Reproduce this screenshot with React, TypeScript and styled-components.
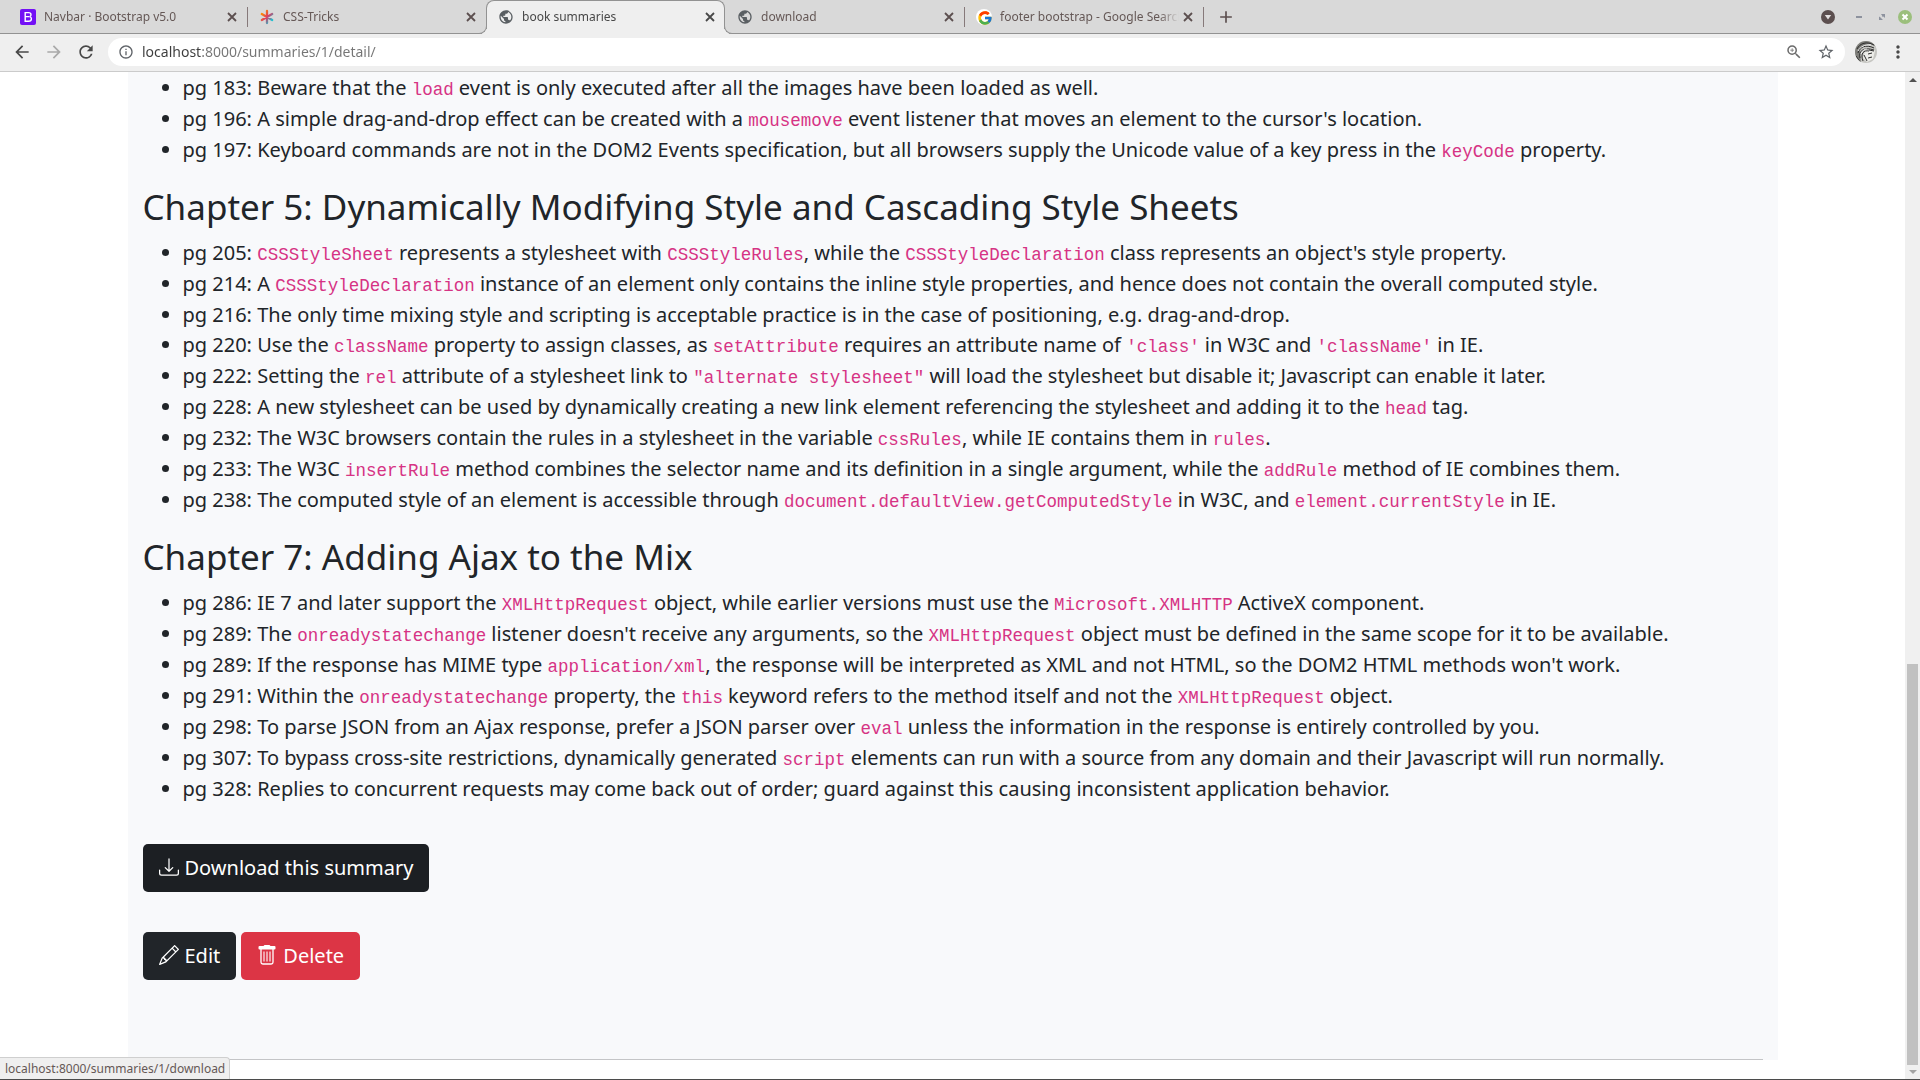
import React from "react";
import styled, { createGlobalStyle } from "styled-components";
import { BsDownload, BsPencil } from "react-icons/bs";
import { FcGoogle } from "react-icons/fc";
import {
  MdArrowBack,
  MdArrowForward,
  MdInfoOutline,
  MdMoreVert,
  MdPublic,
  MdRefresh,
  MdStarBorder,
  MdZoomIn,
  MdAdd,
} from "react-icons/md";

const GlobalStyle = createGlobalStyle`
  *, *::before, *::after { box-sizing: border-box; }
  body {
    margin: 0;
    font-family: "Noto Sans", sans-serif;
    color: #212529;
    background: #fff;
  }
`;

const Browser = styled.div`
  display: flex;
  flex-direction: column;
  height: 100vh;
  border-bottom: 1px solid #4b4b4b;
  overflow: hidden;
`;

const TabStrip = styled.header`
  display: flex;
  align-items: stretch;
  height: 34px;
  flex: none;
  padding: 0 7px 0 8px;
  background: #d9d9d9;
  box-shadow: inset 0 -1px 0 #929292;
`;

const Tabs = styled.nav`
  display: flex;
  min-width: 0;
`;

const Tab = styled.div<{ $active?: boolean; $divider?: boolean }>`
  position: relative;
  display: flex;
  align-items: center;
  gap: 2px;
  width: 239px;
  min-width: 0;
  padding: 0 8px 0 12px;
  color: ${(p) => (p.$active ? "#484848" : "#655856")};
  ${(p) =>
    p.$active &&
    `
    background: #efefef;
    border: 1px solid #929292;
    border-bottom: 0;
    border-radius: 8px 8px 0 0;
    padding: 0 7px 1px 11px;
    &::before, &::after {
      content: "";
      position: absolute;
      bottom: 0;
      width: 8px;
      height: 8px;
      border-bottom: 1px solid #929292;
      background: #d9d9d9;
    }
    &::before {
      left: -8px;
      border-right: 1px solid #929292;
      border-bottom-right-radius: 8px;
      box-shadow: 3px 3px 0 #efefef;
      clip-path: inset(0);
    }
    &::after {
      right: -8px;
      border-left: 1px solid #929292;
      border-bottom-left-radius: 8px;
      box-shadow: -3px 3px 0 #efefef;
      clip-path: inset(0);
    }
  `}
  ${(p) =>
    p.$divider &&
    `
    &::after {
      content: "";
      position: absolute;
      right: -1px;
      top: 7px;
      width: 1px;
      height: 20px;
      background: #86797a;
    }
  `}
`;

const Favicon = styled.span`
  display: flex;
  flex: none;
  width: 16px;
  height: 16px;
  margin-right: 6px;
  color: #5a5f63;
`;

const TabTitle = styled.a`
  flex: 1;
  min-width: 0;
  overflow: hidden;
  white-space: nowrap;
  color: inherit;
  text-decoration: none;
  font-size: 12px;
  line-height: 18px;
  mask-image: linear-gradient(to right, #000 calc(100% - 20px), transparent);
`;

const IconButton = styled.button<{ $size?: number; $color?: string }>`
  display: flex;
  align-items: center;
  justify-content: center;
  flex: none;
  width: ${(p) => p.$size ?? 32}px;
  height: ${(p) => p.$size ?? 32}px;
  padding: 0;
  border: 0;
  background: none;
  color: ${(p) => p.$color ?? "#484848"};
`;

const NewTab = styled(IconButton)`
  align-self: center;
  margin-left: 7px;
`;

const WindowControls = styled.div`
  display: flex;
  align-items: center;
  gap: 7px;
  margin-left: auto;
`;

const TabSearch = styled(IconButton)`
  margin-right: 8px;
`;

const Toolbar = styled.div`
  display: flex;
  align-items: center;
  flex: none;
  height: 38px;
  padding: 0 6px 1px;
  background: #efefef;
  border-bottom: 1px solid #cbcbcb;
`;

const AddressBar = styled.form`
  display: flex;
  align-items: center;
  flex: 1;
  height: 28px;
  margin: 0 5px 0 6px;
  padding: 0 3px 0 10px;
  border-radius: 14px;
  background: #fff;
`;

const Address = styled.input`
  flex: 1;
  min-width: 0;
  margin-left: 8px;
  padding: 0;
  border: 0;
  outline: 0;
  font: 14px/20px "Noto Sans", sans-serif;
  color: transparent;
  background: linear-gradient(to right, #3c3c3c 60px, #757575 60px);
  background-clip: text;
`;

const Viewport = styled.div`
  display: flex;
  flex: 1;
  min-height: 0;
`;

const Page = styled.main`
  flex: 1;
  min-width: 0;
  overflow: hidden;
`;

const Summary = styled.article`
  max-width: 1650px;
  margin: 0 auto;
  padding: 1px 15px 0;
  background: #f8f9fb;
  font-size: 20px;
  line-height: 30px;
`;

const ChapterTitle = styled.h3`
  margin: 0 0 10px;
  font-size: 35px;
  font-weight: 400;
  line-height: 42px;
`;

const Notes = styled.ul`
  margin: 0 0 20px;
  padding-left: 40px;
`;

const Code = styled.code`
  font-family: "Liberation Mono", monospace;
  font-size: 0.875em;
  line-height: 28px;
  color: #d63384;
`;

const Actions = styled.div`
  display: flex;
  gap: 5px;
  padding-top: 20px;
  margin-bottom: 20px;
`;

const buttonColors = { dark: "#212529", pressed: "#1c1f23", danger: "#dc3545" };

const ActionButton = styled.button<{ $tone: keyof typeof buttonColors }>`
  display: flex;
  align-items: center;
  gap: 6px;
  height: 48px;
  padding: 0 16px;
  border: 0;
  border-radius: 5px;
  background: ${(p) => buttonColors[p.$tone]};
  color: #fff;
  font: 20px/30px "Noto Sans", sans-serif;
  svg {
    width: 20px;
    height: 20px;
    margin-bottom: 2px;
  }
`;

const Rule = styled.hr`
  height: 1px;
  margin: 79px 0 0;
  border: 0;
  background: #c4c5c7;
`;

const ScrollBar = styled.div`
  display: flex;
  flex-direction: column;
  align-items: center;
  justify-content: space-between;
  flex: none;
  width: 15px;
  padding: 6px 0 5px;
  background: #f0f0f0;
`;

const ScrollTrack = styled.div`
  display: flex;
  flex-direction: column;
  flex: 1;
  width: 11px;
  margin: 4px 0 5px;
`;

const ScrollSpace = styled.div`
  flex: 578;
`;

const ScrollThumb = styled.div`
  flex: 401;
  background: #c1c1c1;
`;

const ScrollArrow = styled.div<{ $down?: boolean }>`
  border: 4px solid transparent;
  ${(p) =>
    p.$down
      ? "border-top-color: #a3a3a3; border-bottom: 0;"
      : "border-bottom-color: #505050; border-top: 0;"}
`;

const StatusBubble = styled.div`
  position: fixed;
  left: 0;
  bottom: 1px;
  height: 22px;
  padding: 0 4px 0 5px;
  border: 1px solid #cfcfcf;
  border-width: 1px 1px 0 0;
  border-radius: 0 4px 0 0;
  background: #efefef;
  color: #655856;
  font-size: 12px;
  line-height: 21px;
`;

const CloseIcon = () => (
  <svg width="14" height="14" viewBox="0 0 14 14" aria-hidden="true">
    <path d="M3 3l8 8M11 3l-8 8" stroke="currentColor" strokeWidth="1.8" />
  </svg>
);

const TrashIcon = () => (
  <svg width="20" height="20" viewBox="0 0 20 20" fill="none" stroke="currentColor" aria-hidden="true">
    <path d="M7.500 0h5l1 1h4q1 0 1 1v1.500q0 1-1 1h-15q-1 0-1-1v-1.500q0-1 1-1h4z" fill="currentColor" stroke="none" />
    <path d="M4 4v13.200q0 1.800 1.800 1.800h8.400q1.800 0 1.800-1.800V4" strokeWidth="1.3" />
    <path d="M7 6.500v10M10 6.500v10M13 6.500v10" strokeWidth="1.1" />
  </svg>
);

const BootstrapLogo = () => (
  <svg width="16" height="16" viewBox="0 0 16 16" aria-hidden="true">
    <rect width="16" height="16" rx="2" fill="#7310f5" />
    <path
      d="M5.2 3.6h3.3c1.6 0 2.5.8 2.5 2.1 0 .9-.6 1.7-1.4 1.9 1.1.2 1.8 1 1.8 2.1 0 1.6-1.1 2.6-2.9 2.6H5.2zM5.2 7.6h4"
      fill="none"
      stroke="#fff"
      strokeWidth="1.4"
    />
  </svg>
);

const CssTricksLogo = () => (
  <svg width="16" height="16" viewBox="0 0 16 16" aria-hidden="true">
    <defs>
      <linearGradient id="star" gradientUnits="userSpaceOnUse" x1="2" y1="3" x2="14" y2="13">
        <stop offset="0.1" stopColor="#ff8a00" />
        <stop offset="0.5" stopColor="#da3c64" />
        <stop offset="0.9" stopColor="#17c3d4" />
      </linearGradient>
    </defs>
    <path
      d="M8 2v12M2.800 5l10.400 6M13.200 5L2.800 11"
      stroke="url(#star)"
      strokeWidth="2.3"
      strokeLinecap="round"
    />
  </svg>
);

const GlobeLogo = () => <MdPublic size={16} />;

const GoogleLogo = () => (
  <svg width="16" height="16" viewBox="0 0 16 16" aria-hidden="true">
    <circle cx="8" cy="8" r="8" fill="#fff" />
    <FcGoogle x="1" y="1" width="14" height="14" />
  </svg>
);

const Avatar = () => (
  <svg width="22" height="22" viewBox="0 0 22 22" aria-hidden="true">
    <defs>
      <clipPath id="face">
        <circle cx="11" cy="11" r="11" />
      </clipPath>
    </defs>
    <g clipPath="url(#face)" fill="none">
      <rect width="22" height="22" fill="#c6c6c2" />
      <path d="M0 0h22v6L15 3 8 5 5 10l1 12H0z" fill="#7d7d79" />
      <path d="M10 10c3-3 8-3 10 0l-2 8-6 3-4-4z" fill="#ecece8" />
      <path
        d="M2 8c3-6 10-8 17-4M3 12c1-6 8-9 16-5M5 17C3 9 10 6 19 9M8 20C5 12 9 9 14 10M1 15l4 6M9 14l3 6M13 13l4-1M13 17l4-1M14 9l5 1"
        stroke="#2c2c2c"
      />
      <path d="M3 10c2-4 7-7 13-6M6 13c1-3 3-5 6-5M10 13l3 4" stroke="#eee" />
    </g>
  </svg>
);

const tabs = [
  { title: "Navbar · Bootstrap v5.0", Logo: BootstrapLogo, divider: true },
  { title: "CSS-Tricks", Logo: CssTricksLogo },
  { title: "book summaries", Logo: GlobeLogo, active: true },
  { title: "download", Logo: GlobeLogo, divider: true },
  { title: "footer bootstrap - Google Search", Logo: GoogleLogo, divider: true },
];

/* Text between backticks is set as code. */
const chapters: { title?: string; notes: string[] }[] = [
  {
    notes: [
      "pg 183: Beware that the `load` event is only executed after all the images have been loaded as well.",
      "pg 196: A simple drag-and-drop effect can be created with a `mousemove` event listener that moves an element to the cursor's location.",
      "pg 197: Keyboard commands are not in the DOM2 Events specification, but all browsers supply the Unicode value of a key press in the `keyCode` property.",
    ],
  },
  {
    title: "Chapter 5: Dynamically Modifying Style and Cascading Style Sheets",
    notes: [
      "pg 205: `CSSStyleSheet` represents a stylesheet with `CSSStyleRules`, while the `CSSStyleDeclaration` class represents an object's style property.",
      "pg 214: A `CSSStyleDeclaration` instance of an element only contains the inline style properties, and hence does not contain the overall computed style.",
      "pg 216: The only time mixing style and scripting is acceptable practice is in the case of positioning, e.g. drag-and-drop.",
      "pg 220: Use the `className` property to assign classes, as `setAttribute` requires an attribute name of `'class'` in W3C and `'className'` in IE.",
      "pg 222: Setting the `rel` attribute of a stylesheet link to `\"alternate stylesheet\"` will load the stylesheet but disable it; Javascript can enable it later.",
      "pg 228: A new stylesheet can be used by dynamically creating a new link element referencing the stylesheet and adding it to the `head` tag.",
      "pg 232: The W3C browsers contain the rules in a stylesheet in the variable `cssRules`, while IE contains them in `rules`.",
      "pg 233: The W3C `insertRule` method combines the selector name and its definition in a single argument, while the `addRule` method of IE combines them.",
      "pg 238: The computed style of an element is accessible through `document.defaultView.getComputedStyle` in W3C, and `element.currentStyle` in IE.",
    ],
  },
  {
    title: "Chapter 7: Adding Ajax to the Mix",
    notes: [
      "pg 286: IE 7 and later support the `XMLHttpRequest` object, while earlier versions must use the `Microsoft.XMLHTTP` ActiveX component.",
      "pg 289: The `onreadystatechange` listener doesn't receive any arguments, so the `XMLHttpRequest` object must be defined in the same scope for it to be available.",
      "pg 289: If the response has MIME type `application/xml`, the response will be interpreted as XML and not HTML, so the DOM2 HTML methods won't work.",
      "pg 291: Within the `onreadystatechange` property, the `this` keyword refers to the method itself and not the `XMLHttpRequest` object.",
      "pg 298: To parse JSON from an Ajax response, prefer a JSON parser over `eval` unless the information in the response is entirely controlled by you.",
      "pg 307: To bypass cross-site restrictions, dynamically generated `script` elements can run with a source from any domain and their Javascript will run normally.",
      "pg 328: Replies to concurrent requests may come back out of order; guard against this causing inconsistent application behavior.",
    ],
  },
];

const NoteText = ({ text }: { text: string }) => (
  <>
    {text
      .split("`")
      .map((part, i) => (i % 2 ? <Code key={i}>{part}</Code> : <React.Fragment key={i}>{part}</React.Fragment>))}
  </>
);

export default function App() {
  return (
    <>
      <GlobalStyle />
      <Browser>
        <TabStrip>
          <Tabs aria-label="Tabs">
            {tabs.map(({ title, Logo, active, divider }) => (
              <Tab key={title} $active={active} $divider={divider}>
                <Favicon>
                  <Logo />
                </Favicon>
                <TabTitle href="#">{title}</TabTitle>
                <IconButton $size={14} $color={active ? "#484848" : "#5c4f4f"} aria-label="Close tab">
                  <CloseIcon />
                </IconButton>
              </Tab>
            ))}
          </Tabs>
          <NewTab $color="#5c4f4f" aria-label="New tab">
            <MdAdd size={20} />
          </NewTab>
          <WindowControls>
            <TabSearch $size={16} aria-label="Search tabs">
              <svg width="16" height="16" viewBox="0 0 16 16">
                <circle cx="8" cy="8" r="7" fill="#5c4f4f" />
                <path d="M4.800 6h6.400L8 10.500z" fill="#e4e0e0" />
              </svg>
            </TabSearch>
            <IconButton $size={16} aria-label="Minimize">
              <svg width="16" height="16" viewBox="0 0 16 16">
                <path d="M5 7h6v2H5z" fill="#8d929e" />
              </svg>
            </IconButton>
            <IconButton $size={16} aria-label="Restore">
              <svg width="16" height="16" viewBox="0 0 16 16">
                <path d="M7 5h4v4L9.500 7.500 8.500 8 8 6.500zM5 7.500l1.500 1 1 1L9 11H5z" fill="#8d929e" />
              </svg>
            </IconButton>
            <IconButton $size={16} aria-label="Close window">
              <svg width="16" height="16" viewBox="0 0 16 16">
                <circle cx="8" cy="8" r="7" fill="#9bbf7c" />
                <path d="M5.500 5.500l5 5M10.500 5.500l-5 5" stroke="#fff" strokeWidth="2" />
              </svg>
            </IconButton>
          </WindowControls>
        </TabStrip>

        <Toolbar>
          <IconButton aria-label="Back">
            <MdArrowBack size={20} />
          </IconButton>
          <IconButton $color="#a9a9a9" aria-label="Forward">
            <MdArrowForward size={20} />
          </IconButton>
          <IconButton aria-label="Reload">
            <MdRefresh size={20} />
          </IconButton>
          <AddressBar>
            <IconButton $size={16} $color="#5f6368" type="button" aria-label="Site information">
              <MdInfoOutline size={16} />
            </IconButton>
            <Address aria-label="Address" defaultValue="localhost:8000/summaries/1/detail/" />
            <IconButton $color="#6b6b6b" type="button" aria-label="Zoom">
              <MdZoomIn size={18} />
            </IconButton>
            <IconButton $color="#5f6368" type="button" aria-label="Bookmark this page">
              <MdStarBorder size={18} />
            </IconButton>
          </AddressBar>
          <IconButton type="button" aria-label="Profile">
            <Avatar />
          </IconButton>
          <IconButton type="button" aria-label="Menu">
            <MdMoreVert size={20} />
          </IconButton>
        </Toolbar>

        <Viewport>
          <Page>
            <Summary>
              {chapters.map(({ title, notes }, i) => (
                <section key={i}>
                  {title && <ChapterTitle>{title}</ChapterTitle>}
                  <Notes>
                    {notes.map((text) => (
                      <li key={text}>
                        <NoteText text={text} />
                      </li>
                    ))}
                  </Notes>
                </section>
              ))}
              <Actions>
                <ActionButton $tone="pressed">
                  <BsDownload />
                  Download this summary
                </ActionButton>
              </Actions>
              <Actions>
                <ActionButton $tone="dark">
                  <BsPencil />
                  Edit
                </ActionButton>
                <ActionButton $tone="danger">
                  <TrashIcon />
                  Delete
                </ActionButton>
              </Actions>
              <Rule />
            </Summary>
          </Page>
          <ScrollBar aria-hidden="true">
            <ScrollArrow />
            <ScrollTrack>
              <ScrollSpace />
              <ScrollThumb />
            </ScrollTrack>
            <ScrollArrow $down />
          </ScrollBar>
        </Viewport>
        <StatusBubble>localhost:8000/summaries/1/download</StatusBubble>
      </Browser>
    </>
  );
}
